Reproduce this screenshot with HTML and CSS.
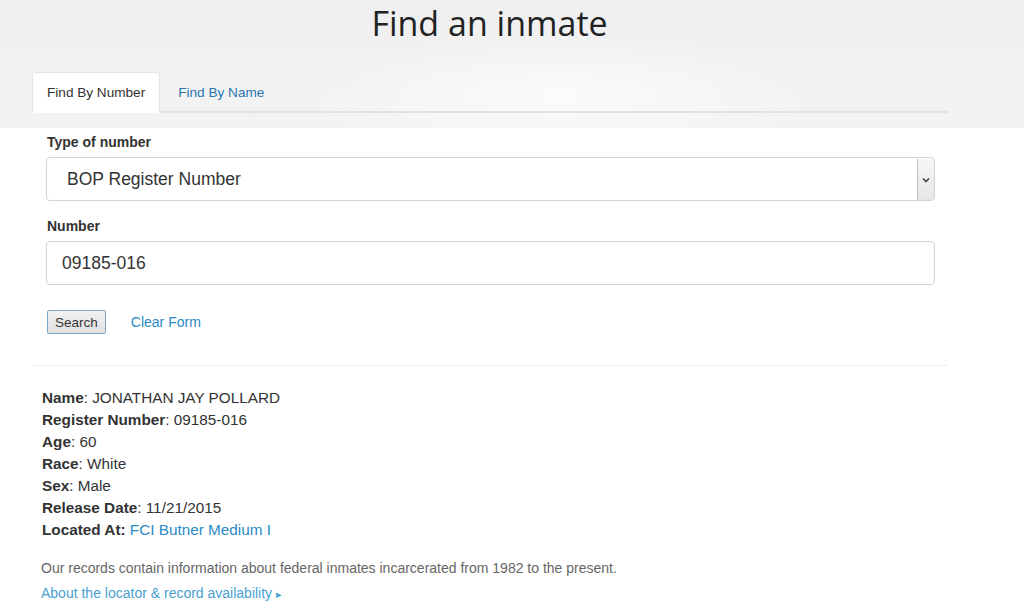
FILE: index.html
```html
<!DOCTYPE html>
<html lang="en">

<head>
    <meta charset="UTF-8">
    <meta name="viewport" content="width=device-width, initial-scale=1.0">
    <title>Find an inmate</title>
    <link rel="stylesheet" href="styles.css">
</head>

<body>
    <div class="header">
        <h1>Find an inmate</h1>
        <div class="tabs">
            <a class="tab active" href="#">Find By Number</a>
            <a class="tab" href="#">Find By Name</a>
        </div>
    </div>

    <div class="container">
        <form class="search-form">
            <label for="type">Type of number</label>
            <div class="select-wrap">
                <select id="type">
                    <option>BOP Register Number</option>
                </select>
                <span class="select-arrow">
                    <svg width="8" height="6" viewBox="0 0 8 6"><path d="M1 1.5 L4 4.5 L7 1.5" fill="none" stroke="#444" stroke-width="1.6"/></svg>
                </span>
            </div>

            <label for="number">Number</label>
            <input type="text" id="number" value="09185-016">

            <div class="actions">
                <button type="button">Search</button>
                <a href="#" class="link">Clear Form</a>
            </div>
        </form>

        <div class="results">
            <div><b>Name</b>: JONATHAN JAY POLLARD</div>
            <div><b>Register Number</b>: 09185-016</div>
            <div><b>Age</b>: 60</div>
            <div><b>Race</b>: White</div>
            <div><b>Sex</b>: Male</div>
            <div><b>Release Date</b>: 11/21/2015</div>
            <div><b>Located At:</b> <a href="#" class="link">FCI Butner Medium I</a></div>
        </div>

        <p class="note">Our records contain information about federal inmates incarcerated from 1982 to the present.</p>
        <a href="#" class="link more">About the locator &amp; record availability <span class="caret">&#9656;</span></a>
    </div>
</body>

</html>
```

FILE: styles.css
```css
body {
    font-family: "Liberation Sans", Arial, sans-serif;
    margin: 0;
    background: #fff;
    color: #333;
}

.header {
    height: 128px;
    background:
        radial-gradient(ellipse 260px 60px at 560px 95px, rgba(255, 255, 255, 0.7), rgba(255, 255, 255, 0)),
        linear-gradient(180deg, #efefef 0%, #f1f1f1 45%, #f3f3f3 100%);
    padding: 0 76px 0 32px;
    box-sizing: border-box;
}

h1 {
    margin: 0 -76px 0 -32px;
    padding: 0 45px 0 0;
    height: 72px;
    box-sizing: border-box;
    text-align: center;
    font-family: "Open Sans", sans-serif;
    font-weight: 400;
    font-size: 34px;
    color: #222;
}

.tabs {
    display: flex;
    border-bottom: 2px solid #e2e2e2;
}

.tab {
    padding: 12px 15px 11px 18px;
    font-size: 13.6px;
    color: #2a76b0;
    text-decoration: none;
    margin-bottom: -2px;
    line-height: 17px;
}

.tab.active {
    background: #fff;
    color: #333;
    border: 1px solid #e4e4e4;
    border-bottom: none;
    border-radius: 3px 3px 0 0;
    padding: 11px 14px 12px 14px;
}

.container {
    padding: 0 76px 0 32px;
}

.search-form {
    padding: 6px 13px 31px 14px;
    border-bottom: 1px solid #eee;
}

label {
    display: block;
    font-size: 14px;
    font-weight: bold;
    color: #333;
    margin: 0 0 7px 1px;
}

.select-wrap {
    position: relative;
    margin-bottom: 17px;
}

select,
input {
    display: block;
    width: 100%;
    height: 44px;
    box-sizing: border-box;
    border: 1px solid #d4d4d4;
    border-radius: 4px;
    font-family: "Liberation Sans", Arial, sans-serif;
    font-size: 17.5px;
    color: #333;
    background: #fff;
}

select {
    appearance: none;
    -webkit-appearance: none;
    padding: 0 20px;
    margin-top: 1px;
}

.select-arrow {
    position: absolute;
    right: 1px;
    top: 2px;
    bottom: 1px;
    width: 16px;
    background: linear-gradient(#f6f6f6, #e6e6e6);
    border-left: 1px solid #bbb;
    border-radius: 0 3px 3px 0;
    display: flex;
    align-items: center;
    justify-content: center;
}

input {
    padding: 0 15px;
    margin-bottom: 25px;
}

.actions {
    display: flex;
    align-items: center;
    gap: 25px;
}

button {
    font-family: "Liberation Sans", Arial, sans-serif;
    font-size: 13.5px;
    color: #333;
    padding: 0 7px;
    height: 24px;
    margin-left: 1px;
    border: 1px solid #7aa7c7;
    border-radius: 2px;
    background: linear-gradient(#f2f2f2, #e0e0e0);
    cursor: pointer;
}

.link {
    color: #2a8ac4;
    text-decoration: none;
}

.actions .link {
    font-size: 14px;
}

.results {
    padding: 21px 0 0 10px;
    font-size: 15.3px;
    line-height: 22px;
    color: #333;
}

.note {
    margin: 19px 0 0 9px;
    font-size: 14px;
    color: #666;
}

.more {
    display: inline-block;
    margin: 9px 0 0 9px;
    font-size: 14px;
    color: #4aa0d0;
}

.caret {
    font-size: 11px;
}
```
